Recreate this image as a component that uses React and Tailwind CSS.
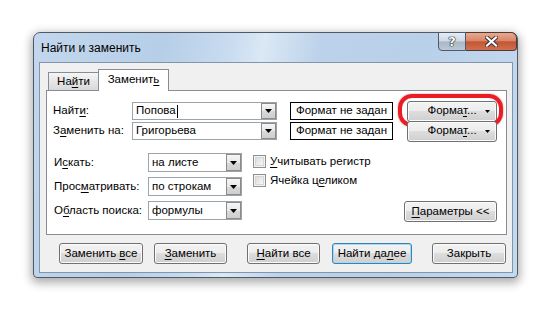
import React from "react";

const font = { fontFamily: '"Liberation Sans", Arial, sans-serif' };

function Tri() {
  return (
    <svg width="7" height="4" viewBox="0 0 7 4" className="block">
      <path d="M0 0H7L3.5 4Z" fill="#000" />
    </svg>
  );
}

function Combo({ w, h, children, caret }) {
  return (
    <div className={`flex ${w} ${h} border border-[#9da3ab] bg-white items-stretch`}>
      <div className="flex-1 flex items-center pl-[3px] leading-none overflow-hidden whitespace-nowrap">
        {children}
        {caret && <span className="inline-block w-px h-[13px] bg-black ml-px" />}
      </div>
      <div className="w-[15px] border border-[#8b8b8b] bg-[linear-gradient(180deg,#f6f6f6_0%,#e9e9e9_50%,#d8d8d8_51%,#cfcfcf_100%)] flex items-center justify-center">
        <Tri />
      </div>
    </div>
  );
}

function Btn({ w, children, def, drop }) {
  return (
    <div
      className={`${w} h-[21px] rounded-[3px] border ${
        def ? "border-[#3c7fb1] shadow-[inset_0_0_0_1px_#9fdcf6]" : "border-[#707070] shadow-[inset_0_0_0_1px_#fbfbfb]"
      } bg-[linear-gradient(180deg,#f3f3f3_0%,#ececec_48%,#dddddd_50%,#cfcfcf_100%)] flex items-center justify-center relative leading-none whitespace-nowrap`}
    >
      <span>{children}</span>
      {drop && (
        <span className="absolute right-[6px] top-[8px]">
          <svg width="5" height="3" viewBox="0 0 5 3" className="block">
            <path d="M0 0H5L2.5 3Z" fill="#000" />
          </svg>
        </span>
      )}
    </div>
  );
}

function Check({ children }) {
  return (
    <div className="flex items-center h-[13px] leading-none whitespace-nowrap">
      <div className="w-[13px] h-[13px] border border-[#8f8f8f] bg-[#f4f4f4] p-px">
        <div className="w-full h-full border border-[#d6d6d6] bg-[linear-gradient(135deg,#dcdcdc_0%,#f7f7f7_100%)]" />
      </div>
      <span className="ml-[4px]">{children}</span>
    </div>
  );
}

const U = ({ children }) => (
  <span className="underline decoration-1 underline-offset-[2px]">{children}</span>
);

export default function App() {
  return (
    <div className="w-[553px] h-[313px] bg-white pl-[33px] pt-[32px] text-[11.5px] text-black" style={font}>
      <div className="w-[485px] h-[246px] border border-[#505a66] rounded-t-[7px] rounded-b-[4px] shadow-[0_3px_10px_2px_rgba(0,0,0,0.32)] bg-[linear-gradient(100deg,#c2d7ed_0%,#b6cee7_25%,#c9dcf0_38%,#dbe8f5_44%,#bcd2ea_55%,#b9d0e9_75%,#c6daee_100%)] flex flex-col">
        <div className="h-[29px] flex items-start shrink-0">
          <div className="pl-[7px] pt-[7px] text-[12px] leading-[16px] text-black whitespace-nowrap">Найти и заменить</div>
          <div className="ml-auto flex -mt-px">
            <div className="w-[28px] h-[19px] border border-[#4d5a6a] rounded-bl-[4px] bg-[linear-gradient(180deg,#e4ecf5_0%,#ccd8e5_48%,#a9b6c4_52%,#bcc8d5_100%)] flex items-center justify-center">
              <span className="text-white font-bold text-[13px] leading-none [text-shadow:0_0_1px_#000,0_0_1px_#000,0_0_1px_#000]" style={{ fontFamily: '"DejaVu Sans", sans-serif' }}>?</span>
            </div>
            <div className="w-[51px] h-[19px] border border-l-0 border-[#4d3a36] rounded-br-[4px] rounded-tr-[6px] bg-[linear-gradient(180deg,#e8a98f_0%,#d98769_45%,#c45532_52%,#d0704e_100%)] flex items-center justify-center">
              <svg width="13" height="11" viewBox="0 0 13 11">
                <path d="M2 1.5L11 9.5M11 1.5L2 9.5" stroke="#333" strokeWidth="4" strokeLinecap="square" />
                <path d="M2 1.5L11 9.5M11 1.5L2 9.5" stroke="#fff" strokeWidth="2.2" strokeLinecap="square" />
              </svg>
            </div>
          </div>
        </div>
        <div className="mx-[4px] ml-[5px] mb-[4px] flex-1 border border-[#8395ab] bg-[#f0f0f0] flex flex-col">
          <div className="pt-[6px] pl-[6px] flex flex-col">
            <div className="flex items-end pl-[2px] h-[21px]">
              <div className="w-[51px] h-[18px] border border-[#898c95] border-b-0 bg-[linear-gradient(180deg,#f5f5f5_0%,#e6e6e6_50%,#d9d9d9_100%)] flex items-center justify-center leading-none pt-[1px]">
                <span>На<U>й</U>ти</span>
              </div>
              <div className="w-[71px] h-[22px] -ml-px -mb-px border border-[#898c95] border-b-0 bg-white flex items-center justify-center leading-none relative z-10 pb-[1px]">
                <span>Заменит<U>ь</U></span>
              </div>
            </div>
            <div className="w-[461px] h-[145px] border border-[#898c95] bg-white pl-[6px] pr-[9px] pt-[11px] flex flex-col">
              <div className="flex items-center h-[18px]">
                <div className="w-[79px] whitespace-nowrap">Найт<U>и</U>:</div>
                <Combo w="w-[145px]" h="h-[18px]" caret>Попова</Combo>
                <div className="ml-[13px] w-[103px] h-[18px] border border-black flex items-center justify-center leading-none whitespace-nowrap">Формат не задан</div>
                <div className="ml-[14px] relative">
                  <Btn w="w-[90px]" drop>Форма<U>т</U>...</Btn>
                  <div className="absolute -left-[9px] -right-[6px] -top-[7px] -bottom-[5px] border-[4px] border-[#ec1c24] rounded-[14px] shadow-[0_0_2px_rgba(120,0,0,0.5)]" />
                </div>
              </div>
              <div className="flex items-center h-[18px] mt-[2px]">
                <div className="w-[79px] whitespace-nowrap">З<U>а</U>менить на:</div>
                <Combo w="w-[145px]" h="h-[18px]">Григорьева</Combo>
                <div className="ml-[13px] w-[103px] h-[18px] border border-black flex items-center justify-center leading-none whitespace-nowrap">Формат не задан</div>
                <div className="ml-[14px]">
                  <Btn w="w-[90px]" drop>Форма<U>т</U>...</Btn>
                </div>
              </div>
              <div className="flex mt-[13px]">
                <div className="flex flex-col gap-[5px]">
                  <div className="flex items-center h-[19px]">
                    <div className="w-[95px] pl-px whitespace-nowrap">И<U>с</U>кать:</div>
                    <Combo w="w-[94px]" h="h-[19px]">на листе</Combo>
                  </div>
                  <div className="flex items-center h-[19px]">
                    <div className="w-[95px] pl-px whitespace-nowrap">Прос<U>м</U>атривать:</div>
                    <Combo w="w-[94px]" h="h-[19px]">по строкам</Combo>
                  </div>
                  <div className="flex items-center h-[19px]">
                    <div className="w-[95px] pl-px whitespace-nowrap">О<U>б</U>ласть поиска:</div>
                    <Combo w="w-[94px]" h="h-[19px]">формулы</Combo>
                  </div>
                </div>
                <div className="ml-[11px] pt-[2px] flex flex-col gap-[6px]">
                  <Check><U>У</U>читывать регистр</Check>
                  <Check>Ячейка ц<U>е</U>ликом</Check>
                </div>
                <div className="ml-auto self-end -mb-[2px]">
                  <Btn w="w-[93px]"><U>П</U>араметры &lt;&lt;</Btn>
                </div>
              </div>
            </div>
          </div>
          <div className="flex pl-[19px] mt-[8px]">
            <Btn w="w-[84px]">Заменить <U>в</U>се</Btn>
            <div className="ml-[11px]"><Btn w="w-[73px]"><U>З</U>аменить</Btn></div>
            <div className="ml-[20px]"><Btn w="w-[73px]"><U>Н</U>айти все</Btn></div>
            <div className="ml-[12px]"><Btn w="w-[80px]" def>Найти да<U>л</U>ее</Btn></div>
            <div className="ml-[20px]"><Btn w="w-[74px]">Закрыть</Btn></div>
          </div>
        </div>
      </div>
    </div>
  );
}
